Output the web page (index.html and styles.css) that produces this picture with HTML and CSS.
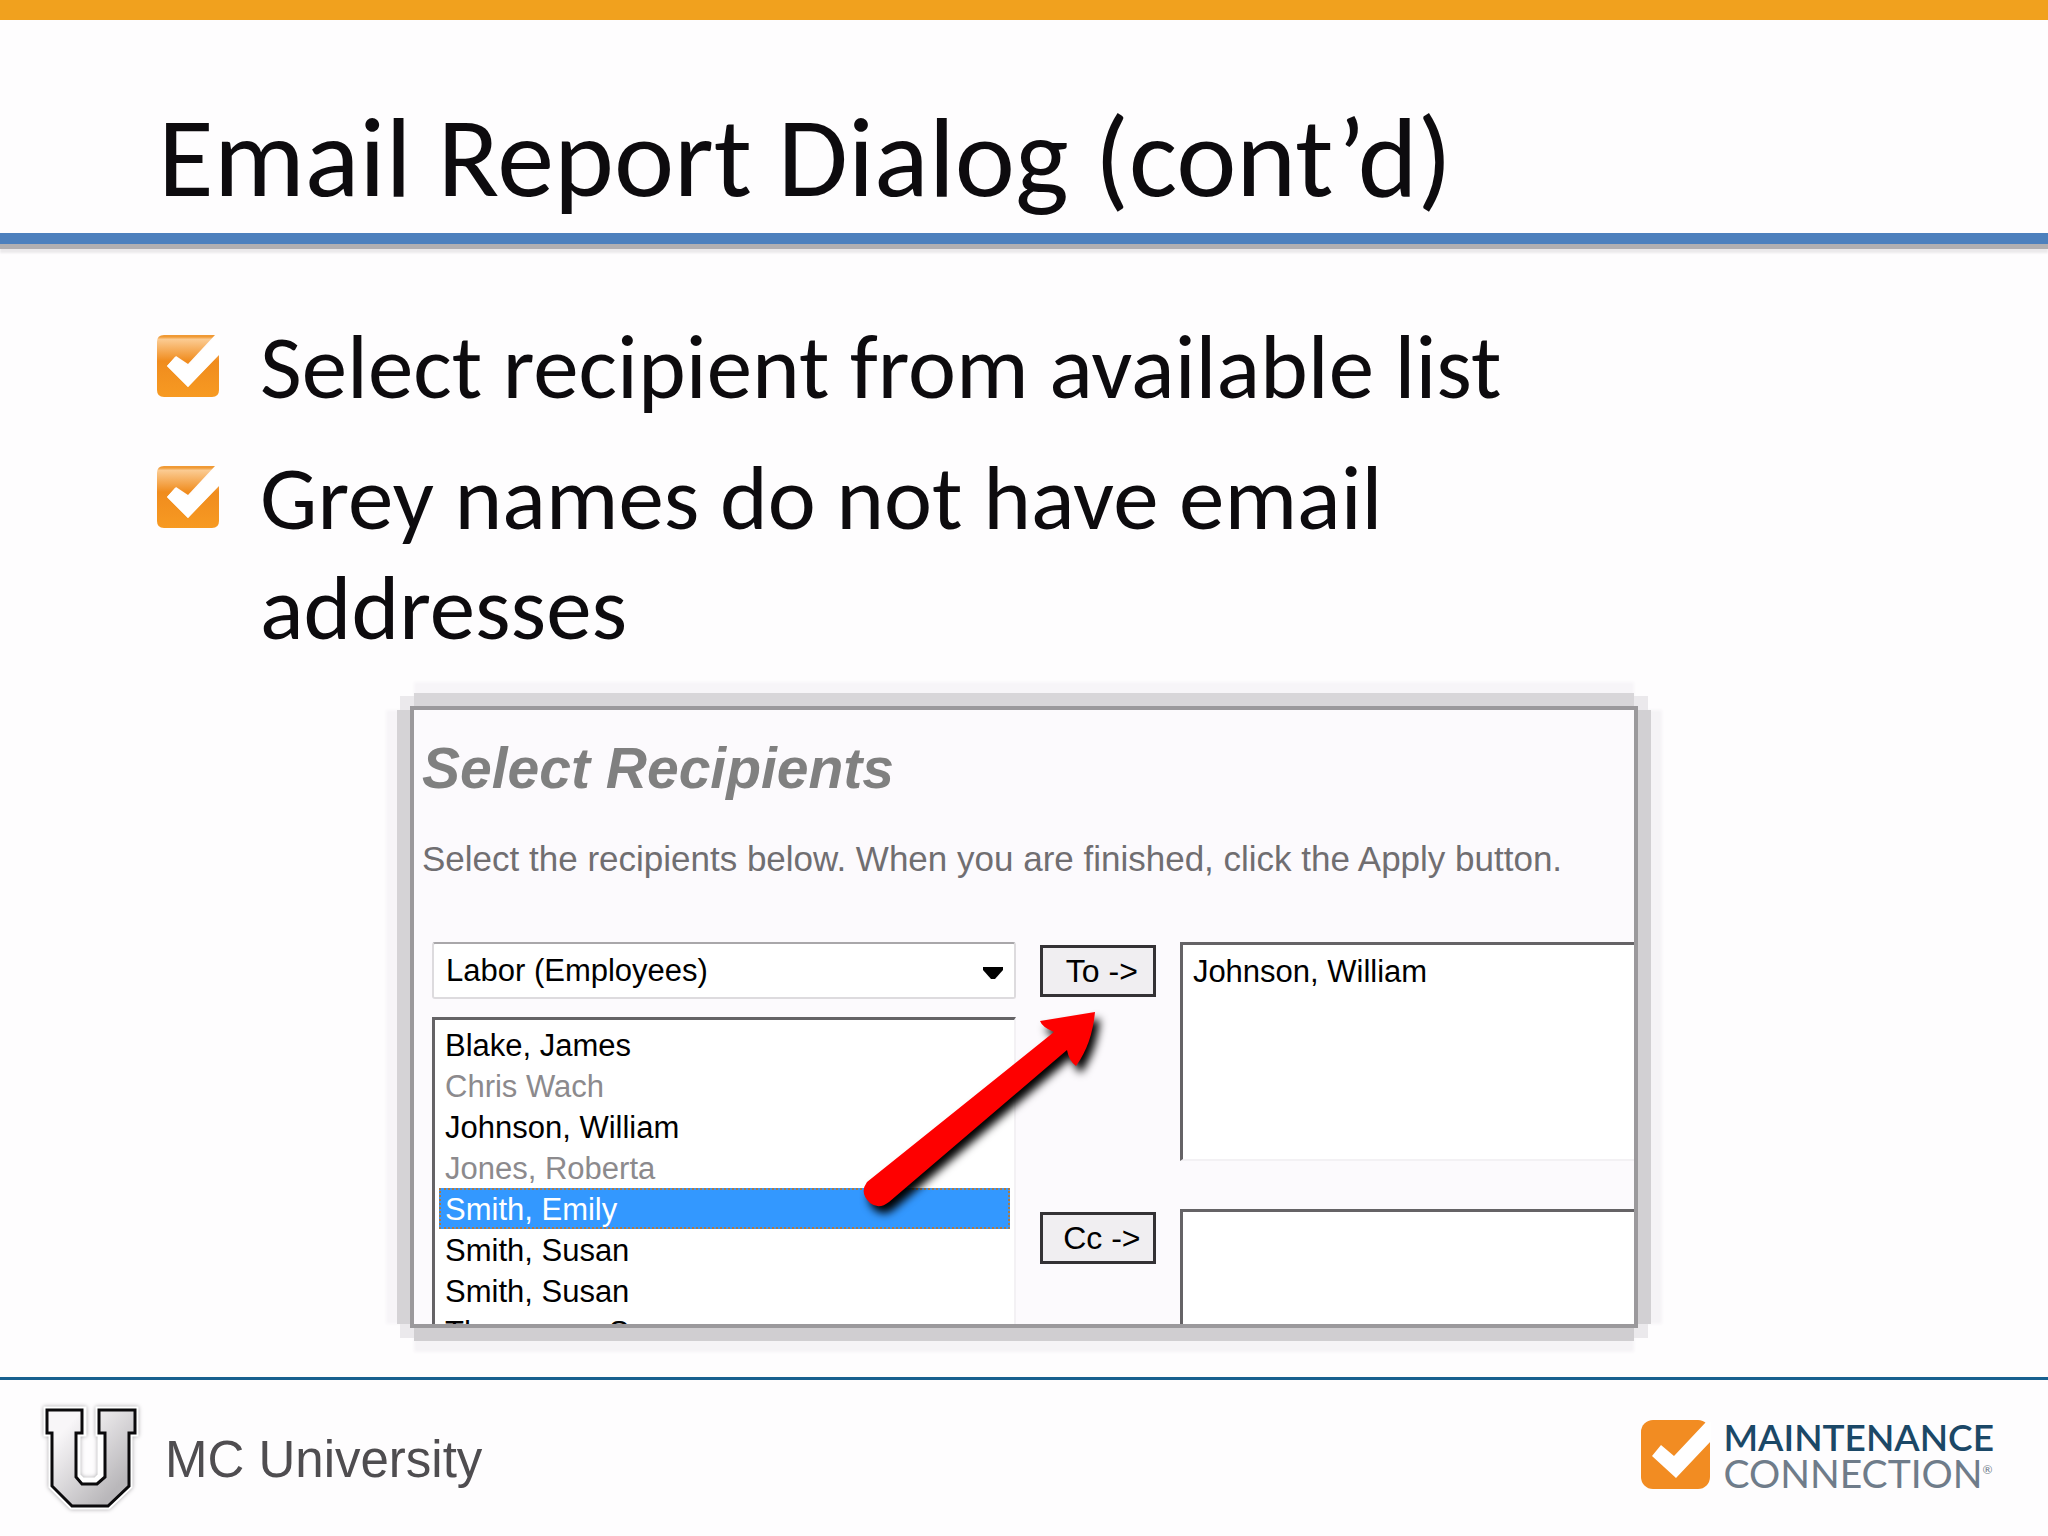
FILE: index.html
```
<!DOCTYPE html>
<html lang="en">
<head>
    <meta charset="UTF-8">
    <meta name="viewport" content="width=device-width, initial-scale=1.0">
    <title>Email Report Dialog (cont’d)</title>
    <link rel="stylesheet" href="styles.css">
</head>
<body>

    <!-- gradients and shapes shared by the icons -->
    <svg class="defs" width="0" height="0" aria-hidden="true">
        <defs>
            <linearGradient id="gloss" x1="0" y1="0" x2="0" y2="1">
                <stop offset="0" stop-color="#f09a35"/>
                <stop offset="0.03" stop-color="#f09a35"/>
                <stop offset="0.07" stop-color="#fbcb92"/>
                <stop offset="0.42" stop-color="#f08c1e"/>
                <stop offset="1" stop-color="#f79a22"/>
            </linearGradient>
            <linearGradient id="steel" x1="0" y1="0" x2="1" y2="1">
                <stop offset="0.2" stop-color="#f8f6f8"/>
                <stop offset="0.8" stop-color="#b9b7ba"/>
            </linearGradient>
            <symbol id="check" viewBox="0 0 64 64">
                <path d="M8 1H59L32 30L20 22L11 32L32 53L63 20V56Q63 63 56 63H8Q1 63 1 56V8Q1 1 8 1Z" fill="url(#gloss)"/>
                <path d="M11 32L19 23L32 33L60 1H64V20L32 53Z" fill="#fff"/>
            </symbol>
        </defs>
    </svg>

    <header class="slide-header">
        <h1>Email Report Dialog (cont’d)</h1>
    </header>

    <main>
        <ul class="points">
            <li>
                <svg class="bullet"><use href="#check"/></svg>
                <span>Select recipient from available list</span>
            </li>
            <li>
                <svg class="bullet"><use href="#check"/></svg>
                <span>Grey names do not have email addresses</span>
            </li>
        </ul>

        <section class="dialog">
            <h2>Select Recipients</h2>
            <p>Select the recipients below. When you are finished, click the Apply button.</p>
            <form class="recipients">
                <div class="source">
                    <div class="dropdown">
                        <select aria-label="Recipient group">
                            <option>Labor (Employees)</option>
                        </select>
                        <svg class="caret" viewBox="0 0 20 12"><path d="M0 0H20V3L12 12H8L0 3Z"/></svg>
                    </div>
                    <select class="list names" size="8" aria-label="Available names">
                        <option>Blake, James</option>
                        <option class="no-email">Chris Wach</option>
                        <option>Johnson, William</option>
                        <option class="no-email">Jones, Roberta</option>
                        <option selected>Smith, Emily</option>
                        <option>Smith, Susan</option>
                        <option>Smith, Susan</option>
                        <option>Thompson, Susan</option>
                    </select>
                </div>
                <button type="button">To -&gt;</button>
                <select class="list target" size="5" aria-label="To">
                    <option>Johnson, William</option>
                </select>
                <button type="button">Cc -&gt;</button>
                <select class="list target" size="5" aria-label="Cc"></select>
            </form>
            <svg class="arrow" viewBox="0 0 260 220">
                <path d="M5 172L192 22Q180 17 178 11L233 2Q230 34 214 56Q207 51 205 40L27 192Q17 200 8 193Q-3 183 5 172Z"/>
            </svg>
        </section>
    </main>

    <footer class="slide-footer">
        <svg class="u-logo" viewBox="0 0 104 112">
            <path class="u-halo" d="M7 8H43V31H37V74L42 79H56L61 74V31H59V8H95V31H89V84L68 104H32L12 84V31H7Z"/>
            <path class="u-body" d="M7 8H42V31H36V75L42 82H57L65 75V31H59V8H95V31H89V84L68 104H32L12 84V31H7Z"/>
        </svg>
        <span class="school">MC University</span>
        <div class="brand">
            <svg class="brand-mark" viewBox="0 0 70 70">
                <rect width="69" height="69" rx="12" fill="#f28c22"/>
                <path d="M11 36L20 25L33 36L65 2H70V21L35 58Z" fill="#fff"/>
            </svg>
            <div class="brand-name">
                <span class="brand-top">MAINTENANCE</span>
                <span class="brand-bottom">CONNECTION<sup>®</sup></span>
            </div>
        </div>
    </footer>

</body>
</html>
```
FILE: styles.css
```
:root {
    --orange: #f1a11e; --blue: #4d80bd; --ink: #0d0b0e;
    --grey: #808080; --line: #656366; --panel: #fcfafd;
}
* { box-sizing: border-box; margin: 0; padding: 0; }
body {
    display: flex; flex-direction: column; height: 100vh; overflow: hidden;
    background: #fefdfe; color: var(--ink); font-family: Carlito, Calibri, Lato, sans-serif;
}
.defs { position: absolute; }

.slide-header {
    border-top: 20px solid var(--orange); border-bottom: 11px solid var(--blue);
    box-shadow: 0 5px 0 #b1afb1, 0 9px 2px #ebe9eb;
    padding: 72px 158px 10px;
}
h1 { font-size: 114px; line-height: 131px; font-weight: 400; }

main { flex: 1; min-height: 0; display: flex; flex-direction: column; padding: 68px 156px 53px; }
.points { list-style: none; max-width: 1400px; }
.points li { display: flex; gap: 40px; font-size: 91px; line-height: 110px; margin-bottom: 21px; }
.bullet { flex: none; width: 64px; height: 64px; margin-top: 22px; }

.dialog {
    position: relative; flex: 1; min-height: 0; width: 100%; max-width: 1220px;
    margin: 26px auto 0; padding: 31px 0 0 18px; background: var(--panel);
    font-family: "Liberation Sans", Arial, sans-serif;
    box-shadow: 0 0 0 4px #9b999c,
        0 -17px 0 #d8d6d9, 0 17px 0 #d0ced1, -17px 0 0 #d5d3d6, 17px 0 0 #d2d0d3,
        0 0 0 14px #ebe9ec,
        0 -28px 3px #f7f5f8, 0 28px 3px #f5f3f6, -28px 0 3px #f7f5f8, 28px 0 3px #f5f3f6;
}
h2 { margin-left: -10px; font-size: 57px; line-height: 54px; font-style: italic; color: var(--grey); }
.dialog p { margin: 34px 0 53px -10px; font-size: 35px; line-height: 60px; color: #706e71; white-space: nowrap; }

.recipients {
    display: grid; grid-template-columns: 9fr 116px 7fr; grid-template-rows: 267px 115px;
    column-gap: 24px; align-items: start; height: 382px; overflow: hidden;
}
.source { grid-row: span 2; min-width: 0; }
select, button { font-family: inherit; font-size: 31px; color: #000; border-radius: 0; outline: none; }
.dropdown { position: relative; margin-bottom: 18px; }
.dropdown select {
    appearance: none; display: block; width: 100%; height: 57px; padding: 0 12px; background: #fff;
    border: 2px solid #dddbde; border-top-color: #a9a7aa; border-radius: 3px;
}
.caret { position: absolute; right: 13px; top: 25px; width: 20px; height: 12px; }
.list {
    display: block; width: 100%; background: #fff; overflow: hidden;
    border: 2px solid #f3f1f4; border-top: 3px solid var(--line); border-left: 3px solid var(--line);
}
.names { height: 340px; padding: 4px; }
.target { height: 219px; padding: 5px 4px; border-right: 0; }
.list option { height: 41px; min-height: 41px; padding: 4px 6px 0; color: #000; }
.names option:checked {
    background: #3398ff linear-gradient(#3398ff, #3398ff); color: #fff;
    outline: 2px dotted #b0793f; outline-offset: -2px;
}
.list .no-email { color: #8c8a8d; }
.recipients button {
    height: 52px; margin-top: 3px; padding-left: 8px; background: #f0eef1;
    border: 3px solid #343235; font-size: 32px; line-height: 44px;
}
.arrow {
    position: absolute; left: 448px; top: 300px; width: 260px; height: 220px;
    fill: #fe0000; filter: drop-shadow(5px 7px 4px #000); overflow: visible;
}

.slide-footer {
    display: flex; align-items: center; height: 159px; padding: 0 54px 0 40px;
    border-top: 3px solid #17608f;
}
.u-logo { width: 104px; height: 112px; }
.u-halo { fill: #fff; stroke: #fff; stroke-width: 7; filter: drop-shadow(0 0 2px #aaa8ab); }
.u-body { fill: url(#steel); stroke: #0b0a0c; stroke-width: 3; }
.school { margin-left: 21px; padding-top: 2px; font: 51px "Liberation Sans", Arial, sans-serif; color: #4f4d50; }
.brand { display: flex; gap: 12px; margin-left: auto; padding-bottom: 6px; align-items: center; }
.brand-mark { width: 70px; height: 70px; }
.brand-name { font-family: Lato, sans-serif; font-size: 37px; line-height: 36px; }
.brand-name span { display: block; }
.brand-top { font-weight: 600; color: #1b4867; }
.brand-bottom { font-size: 39px; color: #6f7c8a; }
.brand-bottom sup { font-size: 12px; line-height: 12px; vertical-align: 14px; }
```
